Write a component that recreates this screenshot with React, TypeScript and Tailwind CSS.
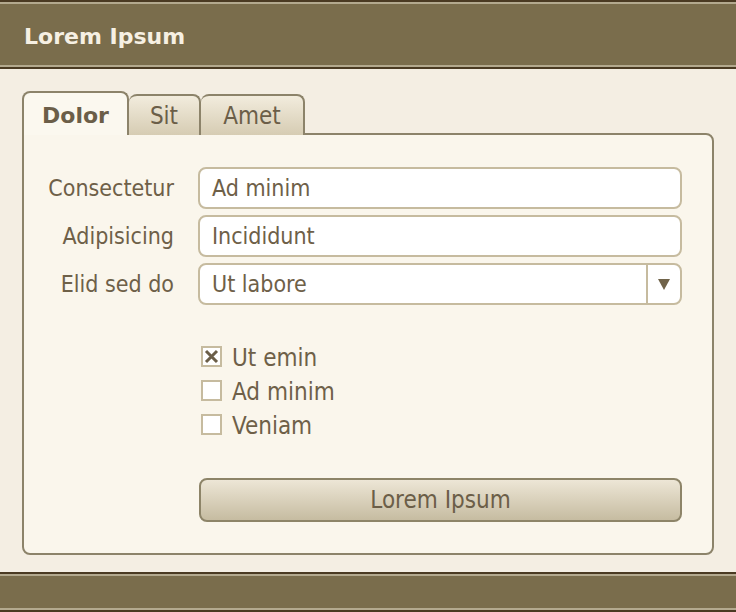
import React from 'react';

const font = { fontFamily: '"DejaVu Sans Condensed", "DejaVu Sans", Tahoma, sans-serif' };
const bold = { fontFamily: '"DejaVu Sans", Tahoma, sans-serif' };

const Bar = ({ children }: { children?: React.ReactNode }) => (
  <div className="border-y-2 border-[#4a3a22]">
    <div className="border-y-2 border-[#b3a98e] bg-[#7a6d4c] h-full flex items-center px-6">{children}</div>
  </div>
);

const Field = ({ label, value, select }: { label: string; value: string; select?: boolean }) => (
  <>
    <div className="text-right pr-[24px] text-[23px] text-[#6e6048] self-center">{label}</div>
    <div className="h-[42px] rounded-lg border-2 border-[#c6bb9f] bg-white flex items-stretch">
      <div className="flex-1 flex items-center pl-[12px] text-[23px] text-[#6e6048]">{value}</div>
      {select && (
        <div className="w-[34px] border-l-2 border-[#c6bb9f] flex items-center justify-center">
          <svg width="12" height="11" viewBox="0 0 12 11">
            <path d="M0 0H12L6 11Z" fill="#706349" />
          </svg>
        </div>
      )}
    </div>
  </>
);

const Check = ({ label, checked }: { label: string; checked?: boolean }) => (
  <div className="flex items-center h-[34px] gap-[10px]">
    <div className="w-[21px] h-[21px] border-2 border-[#c6bb9f] bg-white flex items-center justify-center">
      {checked && (
        <svg width="15" height="15" viewBox="0 0 15 15">
          <path d="M2 2L13 13M13 2L2 13" stroke="#6b5e48" strokeWidth="3" />
        </svg>
      )}
    </div>
    <span className="text-[24px] text-[#6e6048] pt-[4px]">{label}</span>
  </div>
);

const tabSide = 'h-[41px] rounded-t-lg border-2 border-l-0 border-b-0 border-[#8c836a] bg-gradient-to-b from-[#f2ecdd] to-[#d6ccb3] flex items-center justify-center text-[24px] text-[#6b5e48]';

export default function App() {
  return (
    <div className="w-[736px] h-[612px] flex flex-col bg-[#f4eee3]" style={font}>
      <div className="h-[69px] [&>div]:h-full">
        <Bar>
          <span className="text-[22px] font-bold text-[#f6f0e3] pt-[3px]" style={bold}>
            Lorem Ipsum
          </span>
        </Bar>
      </div>

      <div className="flex-1 px-[22px] pt-[22px]">
        <div className="flex items-end h-[44px] relative z-10 -mb-[2px]">
          <div className="w-[107px] h-[44px] rounded-t-lg border-2 border-b-0 border-[#8c836a] bg-[#fbf8ef] flex items-center justify-center text-[22px] font-bold text-[#6b5e48] pt-[2px]" style={bold}>
            Dolor
          </div>
          <div className={`w-[72px] ${tabSide}`}>Sit</div>
          <div className={`w-[104px] ${tabSide}`}>Amet</div>
        </div>
        <div className="h-[422px] border-2 border-[#8c836a] rounded-lg rounded-tl-none bg-[#faf6ec] pt-[32px] pr-[30px]">
          <div className="grid grid-cols-[174px_1fr] gap-y-[6px]">
            <Field label="Consectetur" value="Ad minim" />
            <Field label="Adipisicing" value="Incididunt" />
            <Field label="Elid sed do" value="Ut labore" select />
          </div>
          <div className="ml-[177px] mt-[34px] flex flex-col">
            <Check label="Ut emin" checked />
            <Check label="Ad minim" />
            <Check label="Veniam" />
          </div>
          <div className="ml-[175px] mt-[37px] h-[44px] rounded-lg border-2 border-[#8d8468] bg-gradient-to-b from-[#ede6d6] to-[#c6bca1] flex items-center justify-center text-[24px] text-[#6b5e48]">
            Lorem Ipsum
          </div>
        </div>
      </div>

      <div className="h-[40px] [&>div]:h-full">
        <Bar />
      </div>
    </div>
  );
}
